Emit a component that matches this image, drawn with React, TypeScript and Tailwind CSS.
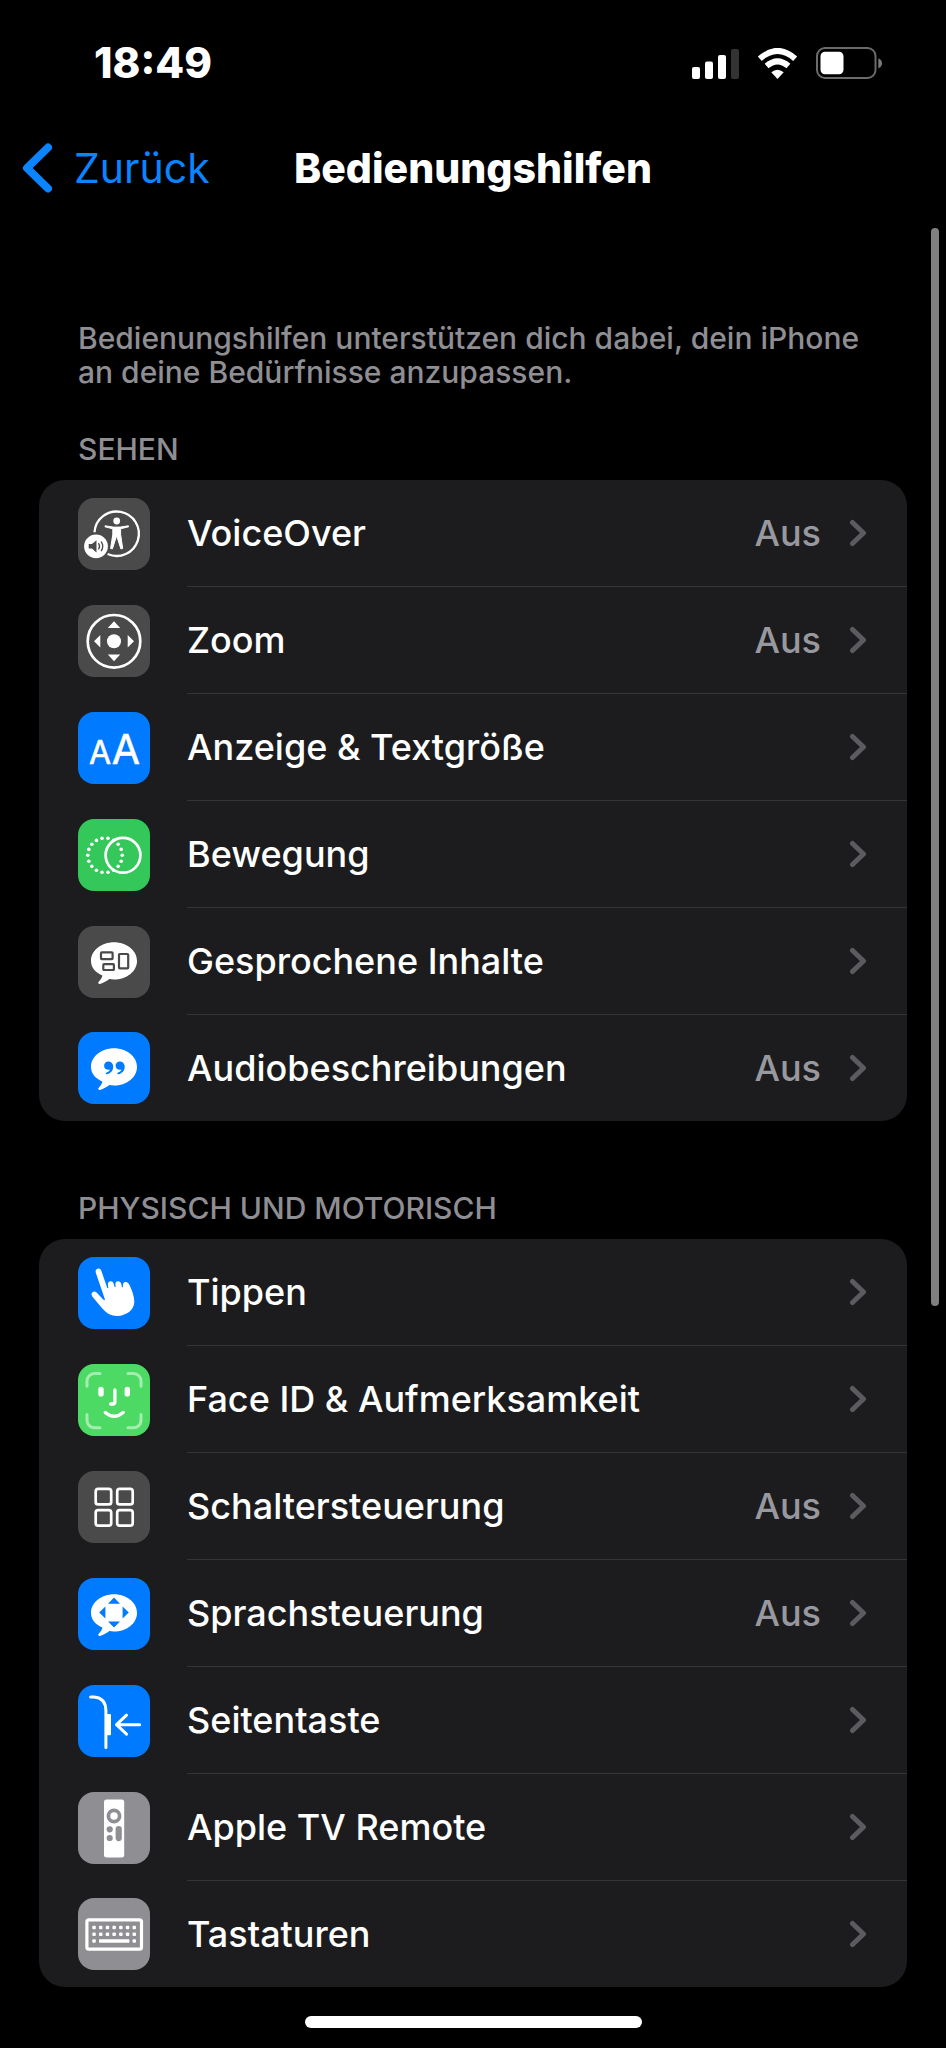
import type { ReactNode } from "react";

function Tile({ tone, children }: { tone: string; children: ReactNode }) {
  return (
    <svg viewBox="0 0 72 72" aria-hidden="true" className={`size-[72px] shrink-0 rounded-2xl ${tone}`}>
      {children}
    </svg>
  );
}

const DARK = "bg-[#4a4a4a]";
const BLUE = "bg-[#007aff]";
const GREEN = "bg-[#34c759]";
const LIME = "bg-[#4cd964]";
const GRAY = "bg-[#8e8e93]";

function Bubble() {
  return (
    <path
      fill="#fff"
      d="M36 16.3c12.7 0 23 8.3 23 18.6s-10.300 18.600-23 18.600c-1.600 0-3.100-.1-4.600-.4-2.600 2-6 4-9.400 4.800-1.500.3-2.300-1-1.300-2.200 1.900-2 3.300-3.900 3.700-6.300C17.100 46.400 13 41.200 13 34.900c0-10.300 10.300-18.600 23-18.600z"
    />
  );
}

function VoiceOverIcon() {
  return (
    <Tile tone={DARK}>
      <path d="M16.500 34.300a22.200 22.200 0 1 1 13.100 21.700" fill="none" stroke="#fff" strokeWidth="2.300" />
      <circle cx="38.700" cy="23" r="3.400" fill="#fff" />
      <path
        fill="#fff"
        stroke="#fff"
        strokeWidth="1"
        strokeLinejoin="round"
        d="M27 27.800l8.200 1.300h7l8.200-1.300.2 1-8 2v5.500l2.100 14.200-1.800.4-4-12.400h-.5l-4 12.400-1.800-.4 2.200-14.200v-5.500l-7.800-2z"
      />
      <circle cx="18" cy="48.300" r="11.900" fill="#fff" />
      <path d="M10.700 46h3.200l4.600-3.800v12.200l-4.600-3.800h-3.200z" fill="#4a4a4a" />
      <path d="M20.700 45.600q1.800 2.700 0 5.400M23.300 43.900q3 4.400 0 8.800" fill="none" stroke="#4a4a4a" strokeWidth="1.300" strokeLinecap="round" />
    </Tile>
  );
}

function ZoomIcon() {
  return (
    <Tile tone={DARK}>
      <circle cx="36" cy="36.300" r="26.300" fill="none" stroke="#fff" strokeWidth="2.700" />
      <circle cx="36" cy="36.300" r="7" fill="#fff" />
      <path fill="#fff" d="M36 16.300l6.200 6.700H29.800zM36 56.300l6.200-6.700H29.800zM16 36.300l6.300-6.200v12.400zM56 36.300l-6.300-6.200v12.400z" />
    </Tile>
  );
}

function TextSizeIcon() {
  return (
    <Tile tone={BLUE}>
      <g fill="#fff" stroke="#fff" strokeWidth="0.600" strokeLinejoin="round" textAnchor="middle" className="font-['Inter',sans-serif]">
        <text x="22" y="51.500" fontSize="32">A</text>
        <text x="48" y="51.500" fontSize="41">A</text>
      </g>
    </Tile>
  );
}

function MotionIcon() {
  const dots = Array.from({ length: 18 }, (_, i) => (i * 20 * Math.PI) / 180);
  return (
    <Tile tone={GREEN}>
      {dots.map((a) => (
        <circle key={a} cx={27 + 17.2 * Math.cos(a)} cy={36.3 + 17.2 * Math.sin(a)} r="1.800" fill="#fff" />
      ))}
      <circle cx="45" cy="36.300" r="17.400" fill="none" stroke="#fff" strokeWidth="2.700" />
    </Tile>
  );
}

function SpokenIcon() {
  return (
    <Tile tone={DARK}>
      <Bubble />
      <g fill="none" stroke="#4a4a4a" strokeWidth="2.200">
        <rect x="23" y="26.300" width="11.600" height="6.800" rx="0.800" />
        <rect x="25.300" y="38.200" width="10.600" height="5.800" rx="0.800" />
        <rect x="41" y="28" width="9.200" height="14.400" rx="0.800" />
      </g>
    </Tile>
  );
}

function QuoteIcon() {
  return (
    <Tile tone={BLUE}>
      <Bubble />
      <path
        fill="#007aff"
        d="M30.300 29.500c2.900 0 4.900 2.100 4.900 5.200 0 4-2.700 6.700-6.400 7.600-1.100.2-1.500-1.100-.5-1.500 1.900-.7 3.200-1.700 3.700-3.200-3.200.9-5.900-1.100-5.900-3.900 0-2.400 1.800-4.200 4.200-4.200zM41.800 29.500c2.900 0 4.900 2.100 4.900 5.200 0 4-2.700 6.700-6.400 7.600-1.100.2-1.500-1.100-.5-1.500 1.900-.7 3.200-1.700 3.700-3.200-3.200.9-5.900-1.100-5.900-3.900 0-2.400 1.800-4.200 4.200-4.200z"
      />
    </Tile>
  );
}

function TouchIcon() {
  return (
    <Tile tone={BLUE}>
      <path
        fill="#fff"
        d="M19.500 11.800c1.700-.6 3.200.2 3.800 1.900l6 17.200c.2.700 1.100.4 1-.2l-.4-3c-.3-2 .8-3.300 2.500-3.500 1.500-.2 2.700.7 3.200 2.300l.9 3.300c.2.700 1.100.5 1.100-.2l-.2-2c-.2-1.900.9-3.200 2.600-3.300 1.500-.1 2.700.8 3.200 2.500l.8 3.100c.2.600 1 .5 1-.2l-.1-1.400c-.1-1.800.8-3 2.400-3.200 2-.2 3.500 1.300 4.400 3.500 2.300 5 4.700 10.800 4.600 16.400C56.100 53 48.300 58.900 39.300 58.900c-6.300 0-11.300-3-15.400-8L14.300 39.400c-1.200-1.500-1-3.200.2-4.200 1.200-1 2.800-.8 4.100.4l6.900 7.200c.7.700 1.600.3 1.300-.7L17.900 16c-.7-2-.1-3.600 1.600-4.200z"
      />
    </Tile>
  );
}

function FaceIcon() {
  return (
    <Tile tone={LIME}>
      <g fill="none" strokeLinecap="round" strokeLinejoin="round">
        <path
          stroke="#a5ecb1"
          strokeWidth="3"
          d="M9 22.300V17a7.500 7.500 0 0 1 7.500-7.500H22M50 9.500h5.500A7.500 7.500 0 0 1 63 17v5.300M63 50.500v5.800a7.500 7.500 0 0 1-7.500 7.500H50M22 63.800h-5.500A7.500 7.500 0 0 1 9 56.300v-5.800"
        />
        <path stroke="#fff" strokeWidth="5.400" d="M23 25.500v4.400M49.300 25.500v4.400" />
        <path stroke="#fff" strokeWidth="3.300" d="M36.900 26v11.700q0 2.300-2.300 2.300h-2M27.200 48.400q9 7.600 18 0" />
      </g>
    </Tile>
  );
}

function SwitchIcon() {
  return (
    <Tile tone={DARK}>
      <g fill="none" stroke="#fff" strokeWidth="2.700">
        <rect x="17.700" y="17.900" width="15.500" height="15.500" rx="2.500" />
        <rect x="39.200" y="17.900" width="15.500" height="15.500" rx="2.500" />
        <rect x="17.700" y="39.200" width="15.500" height="15.500" rx="2.500" />
        <rect x="39.200" y="39.200" width="15.500" height="15.500" rx="2.500" />
      </g>
    </Tile>
  );
}

function VoiceControlIcon() {
  return (
    <Tile tone={BLUE}>
      <Bubble />
      <path fill="#007aff" d="M36 19.600l6 6.200H30zM36 49.600l6-6.200H30zM21.200 34.600l6.200-6v12zM50.800 34.600l-6.200-6v12z" />
    </Tile>
  );
}

function SideButtonIcon() {
  return (
    <Tile tone={BLUE}>
      <g fill="none" stroke="#fff" strokeWidth="3" strokeLinecap="round" strokeLinejoin="round">
        <path d="M12.600 12H16q11.800 1 11.900 13.500v37" />
        <path d="M38.500 39.700h23.200M48.500 30.200l-10 9.500 10 9.500" />
      </g>
      <rect x="27.500" y="29" width="5.500" height="21.300" rx="1" fill="#fff" />
    </Tile>
  );
}

function RemoteIcon() {
  return (
    <Tile tone={GRAY}>
      <rect x="26" y="7.500" width="20.200" height="58" rx="2.500" fill="#fff" />
      <circle cx="36" cy="24" r="5.600" fill="none" stroke="#8e8e93" strokeWidth="3.700" />
      <circle cx="31.700" cy="37.300" r="3.100" fill="#8e8e93" />
      <circle cx="31.700" cy="46" r="3.100" fill="#8e8e93" />
      <rect x="37.600" y="34" width="6.200" height="15.200" rx="3.100" fill="#8e8e93" />
    </Tile>
  );
}

function KeyboardIcon() {
  const columns = [0, 1, 2, 3, 4, 5, 6];
  return (
    <Tile tone={GRAY}>
      <rect x="8.900" y="21.800" width="54.600" height="29.400" rx="2" fill="none" stroke="#fff" strokeWidth="3.200" />
      <g fill="#fff">
        {columns.map((c) => (
          <g key={c}>
            <rect x={14.3 + c * 6.7} y="27.800" width="3.500" height="3.500" rx="1" />
            <rect x={14.3 + c * 6.7} y="34.400" width="3.500" height="3.500" rx="1" />
          </g>
        ))}
        <rect x="14.300" y="41.200" width="3.500" height="3.500" rx="1" />
        <rect x="21" y="41.200" width="30.400" height="3.500" rx="0.600" />
        <rect x="54.500" y="41.200" width="3.500" height="3.500" rx="1" />
      </g>
    </Tile>
  );
}

type Item = { label: string; icon: ReactNode; value?: string };

const seeing: Item[] = [
  { label: "VoiceOver", icon: <VoiceOverIcon />, value: "Aus" },
  { label: "Zoom", icon: <ZoomIcon />, value: "Aus" },
  { label: "Anzeige & Textgröße", icon: <TextSizeIcon /> },
  { label: "Bewegung", icon: <MotionIcon /> },
  { label: "Gesprochene Inhalte", icon: <SpokenIcon /> },
  { label: "Audiobeschreibungen", icon: <QuoteIcon />, value: "Aus" },
];

const physical: Item[] = [
  { label: "Tippen", icon: <TouchIcon /> },
  { label: "Face ID & Aufmerksamkeit", icon: <FaceIcon /> },
  { label: "Schaltersteuerung", icon: <SwitchIcon />, value: "Aus" },
  { label: "Sprachsteuerung", icon: <VoiceControlIcon />, value: "Aus" },
  { label: "Seitentaste", icon: <SideButtonIcon /> },
  { label: "Apple TV Remote", icon: <RemoteIcon /> },
  { label: "Tastaturen", icon: <KeyboardIcon /> },
];

function Section({ title, items }: { title: string; items: Item[] }) {
  return (
    <section>
      <h2 className="px-[39px] text-[30px] leading-[34px] font-medium text-[#8e8e93] uppercase">{title}</h2>
      <ul className="mt-[14px] overflow-hidden rounded-[26px] bg-[#1c1c1e]">
        {items.map((item) => (
          <li key={item.label} className="group">
            <a href="#" className="flex items-center gap-[37px] pl-[39px]">
              {item.icon}
              <span className="flex min-h-[107px] grow items-center border-b border-[#343437] pr-10 group-last:min-h-[106px] group-last:border-b-0">
                <span className="grow text-[36px] leading-[44px] font-medium text-white">{item.label}</span>
                {item.value && (
                  <span className="mr-7 text-[36px] leading-[44px] font-medium text-[#98989f]">{item.value}</span>
                )}
                <svg viewBox="0 0 18 28" aria-hidden="true" className="h-7 w-[18px] shrink-0">
                  <path d="M3.500 3.500L14.500 14L3.500 24.500" fill="none" stroke="#5c5c60" strokeWidth="5" strokeLinecap="round" strokeLinejoin="round" />
                </svg>
              </span>
            </a>
          </li>
        ))}
      </ul>
    </section>
  );
}

function StatusBar() {
  return (
    <div className="flex h-[126px] items-center justify-between pr-16 pl-[94px] text-white">
      <span className="text-[42px] leading-[48px] font-extrabold">18:49</span>
      <div className="flex items-center gap-[18px]">
        <svg viewBox="0 0 47 31" role="img" aria-label="Mobilfunk" className="h-[31px] w-[47px]">
          <rect x="0" y="19" width="8" height="12" rx="2" fill="#fff" />
          <rect x="13" y="13.500" width="8" height="17.500" rx="2" fill="#fff" />
          <rect x="26" y="7" width="8" height="24" rx="2" fill="#fff" />
          <rect x="39" y="1" width="8" height="30" rx="2" fill="#333" />
        </svg>
        <svg viewBox="0 0 41 31" role="img" aria-label="WLAN" className="h-[31px] w-[41px]">
          <path d="M2.800 10.700Q20.500-4.800 38.200 10.700" fill="none" stroke="#fff" strokeWidth="6" />
          <path d="M9.600 18Q20.500 8.600 31.400 18" fill="none" stroke="#fff" strokeWidth="6" />
          <path d="M14.300 24.300Q20.500 19 26.700 24.300L20.500 31z" fill="#fff" />
        </svg>
        <svg viewBox="0 0 66 32" role="img" aria-label="Batterie" className="h-8 w-[66px]">
          <rect x="1" y="1" width="58.500" height="30" rx="8" fill="none" stroke="#6b6b6b" strokeWidth="2" />
          <rect x="4.500" y="4.800" width="23" height="22.400" rx="4.500" fill="#fff" />
          <path d="M62.300 11.200q3.700 1.500 3.700 5t-3.700 5z" fill="#7a7a7a" />
        </svg>
      </div>
    </div>
  );
}

export default function App() {
  return (
    <div className="relative min-h-screen bg-black font-['Inter',sans-serif]">
      <StatusBar />
      <header className="grid grid-cols-[1fr_auto_1fr] items-center px-[22px] py-4">
        <a href="#" className="flex items-center gap-[22px] text-[41px] leading-[52px] text-[#0a84ff]">
          <svg viewBox="0 0 30 50" aria-hidden="true" className="h-[50px] w-[30px] shrink-0">
            <path d="M26 4.500L5 25L26 45.500" fill="none" stroke="#0a84ff" strokeWidth="8" strokeLinecap="round" strokeLinejoin="round" />
          </svg>
          Zurück
        </a>
        <h1 className="text-[41px] leading-[52px] font-extrabold text-white">Bedienungshilfen</h1>
      </header>
      <main className="px-[39px] pt-[111px]">
        <p className="mb-[43px] px-[39px] text-[30px] leading-[34px] font-medium text-[#8e8e93]">
          Bedienungshilfen unterstützen dich dabei, dein iPhone an deine Bedürfnisse anzupassen.
        </p>
        <div className="flex flex-col gap-[70px]">
          <Section title="Sehen" items={seeing} />
          <Section title="Physisch und motorisch" items={physical} />
        </div>
      </main>
      <div className="mx-auto mt-[29px] h-3 w-[337px] rounded-full bg-white" />
      <div className="absolute top-[228px] right-[7px] h-[1078px] w-2 rounded-full bg-[#808080]" />
    </div>
  );
}
